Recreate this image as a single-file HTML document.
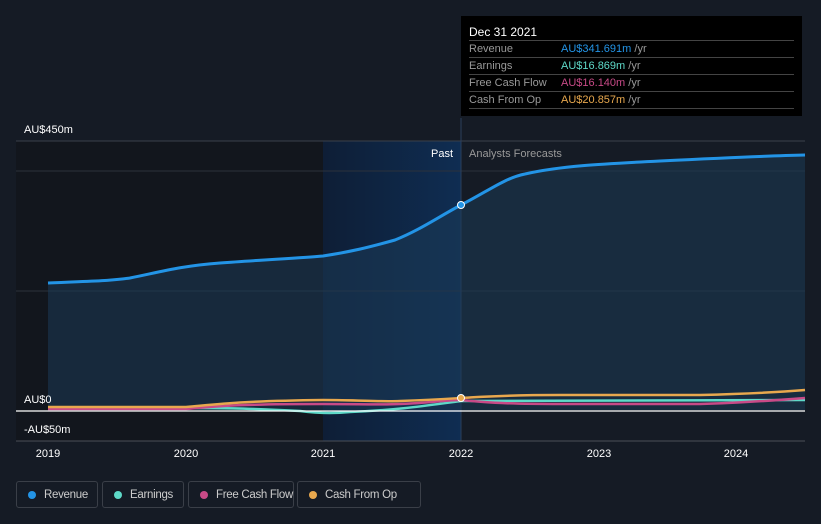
<!DOCTYPE html>
<html><head><meta charset="utf-8"><style>
body{margin:0;background:#151b25;font-family:"Liberation Sans",sans-serif;}
.wrap{position:relative;width:821px;height:524px;overflow:hidden;}
svg{position:absolute;left:0;top:0}
.tip{position:absolute;left:461px;top:16px;width:341px;height:100px;background:#000;color:#fff;font-size:11px}
.tip .h{position:absolute;left:8px;top:9px;font-size:12px}
.row{position:absolute;left:8px;width:325px;border-top:1px solid #444;height:16px;line-height:16px;color:#999;white-space:nowrap}
.row span{position:absolute;left:92px}
.leg{position:absolute;top:481px;height:27px;border:1px solid #3a3f48;border-radius:3px;color:#ccc;font-size:11.5px;line-height:27px;box-sizing:border-box;white-space:nowrap}
.leg i{position:absolute;left:11px;top:9px;width:8px;height:8px;border-radius:50%}
.leg b{font-weight:normal;position:absolute;left:27px;letter-spacing:-0.3px}
</style></head><body><div class="wrap">
<svg width="821" height="524">
<defs><linearGradient id="hl" x1="0" x2="1"><stop offset="0" stop-color="#0e1e36"/><stop offset="1" stop-color="#0f2d52"/></linearGradient></defs>
<rect x="16" y="141" width="307" height="300" fill="#12161d"/>
<rect x="323" y="141" width="138" height="300" fill="url(#hl)"/>
<line x1="16" y1="141" x2="805" y2="141" stroke="#3a404a"/>
<line x1="16" y1="171" x2="805" y2="171" stroke="#2c323c"/>
<line x1="16" y1="291" x2="805" y2="291" stroke="#2c323c"/>
<line x1="461" y1="118" x2="461" y2="441" stroke="#2a3f5c"/>
<path d="M48,283 C90,281 110,281 130,278 C160,272 180,266 220,263 C260,260 300,258 323,256 C350,252 370,247 395,240 C420,230 440,216 461,205 C490,190 505,178 525,174 C560,166 600,164 660,161 C720,158 760,156 805,155 L805,410 L48,410Z" fill="#1c3a55" opacity="0.55"/>
<path d="M48,283 C90,281 110,281 130,278 C160,272 180,266 220,263 C260,260 300,258 323,256 C350,252 370,247 395,240 C420,230 440,216 461,205 C490,190 505,178 525,174 C560,166 600,164 660,161 C720,158 760,156 805,155" fill="none" stroke="#2394e6" stroke-width="3"/>
<path d="M48,408 L186,408 C220,408 240,408 300,411 C315,413 330,414 350,412 C400,410 430,405 461,401 L805,400" fill="none" stroke="#5ed9c8" stroke-width="2.5"/>
<path d="M48,409 L186,409 C220,406 240,404 323,404 C360,404 380,405 400,404 C430,403 445,400 461,400 C480,402 500,404 560,404 L700,404 C740,403 780,400 805,398" fill="none" stroke="#c84a87" stroke-width="2.5"/>
<path d="M48,407 L186,407 C220,404 240,401 323,400 C360,400 380,402 400,401 C430,400 445,399 461,398 C480,397 500,395 560,395 L700,395 C740,394 780,392 805,390" fill="none" stroke="#e8a84e" stroke-width="2.5"/>
<circle cx="461" cy="205" r="3.5" fill="#2394e6" stroke="#fff"/>
<circle cx="461" cy="398" r="3.5" fill="#e8a84e" stroke="#fff"/>
<line x1="16" y1="411" x2="805" y2="411" stroke="#fff" stroke-width="1.2"/>
<line x1="16" y1="441" x2="805" y2="441" stroke="#4a4f58"/>
<g fill="#fff" font-size="11" text-anchor="middle">
<text x="48" y="457">2019</text><text x="186" y="457">2020</text><text x="323" y="457">2021</text><text x="461" y="457">2022</text><text x="599" y="457">2023</text><text x="736" y="457">2024</text></g>
<g fill="#fff" font-size="11"><text x="24" y="133">AU$450m</text><text x="24" y="403">AU$0</text><text x="24" y="433">-AU$50m</text>
<text x="453" y="157" text-anchor="end">Past</text><text x="469" y="157" fill="#999">Analysts Forecasts</text></g>
</svg>
<div class="tip"><div class="h">Dec 31 2021</div>
<div class="row" style="top:24px">Revenue<span style="color:#2394e6">AU$341.691m <em style="font-style:normal;color:#999">/yr</em></span></div>
<div class="row" style="top:41px">Earnings<span style="color:#5ed9c8">AU$16.869m <em style="font-style:normal;color:#999">/yr</em></span></div>
<div class="row" style="top:58px">Free Cash Flow<span style="color:#c84a87">AU$16.140m <em style="font-style:normal;color:#999">/yr</em></span></div>
<div class="row" style="top:75px;border-bottom:1px solid #444">Cash From Op<span style="color:#e8a84e">AU$20.857m <em style="font-style:normal;color:#999">/yr</em></span></div>
</div>
<div class="leg" style="left:16px;width:82px"><i style="background:#2394e6"></i><b>Revenue</b></div>
<div class="leg" style="left:102px;width:82px"><i style="background:#5ed9c8"></i><b>Earnings</b></div>
<div class="leg" style="left:188px;width:106px"><i style="background:#c84a87"></i><b>Free Cash Flow</b></div>
<div class="leg" style="left:297px;width:124px"><i style="background:#e8a84e"></i><b>Cash From Op</b></div>
</div></body></html>
